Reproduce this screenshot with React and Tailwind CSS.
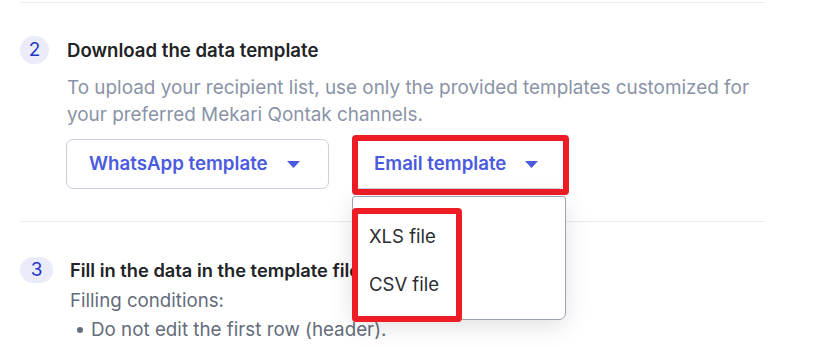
import React from "react";

const Caret = () => (
  <svg width="13" height="7" viewBox="0 0 13 7" className="shrink-0">
    <path d="M0 0 L13 0 L6.5 7 Z" fill="#4a5be0" />
  </svg>
);

const StepBadge = ({ n, className }) => (
  <div
    className={`flex items-center justify-center rounded-full bg-[#ebecfa] text-[#2438c4] text-[19px] ${className}`}
  >
    {n}
  </div>
);

export default function App() {
  return (
    <div
      className="relative w-[824px] h-[347px] overflow-hidden bg-white"
      style={{ fontFamily: "Inter, 'Noto Sans', sans-serif" }}
    >
      <div className="w-[745px] ml-[20px]">
        {/* === Top divider === */}
        <div className="mt-[2px] h-px bg-[#ececef]" />

        {/* === Step 2 === */}
        <div className="flex mt-[33px]">
          <StepBadge n="2" className="w-[29px] h-[28px] shrink-0" />
          <div className="ml-[18px] flex-1">
            <h3 className="text-[18.6px] leading-[28px] font-semibold text-[#222326]">
              Download the data template
            </h3>
            <p className="mt-[10px] text-[18.9px] leading-[27px] text-[#8a93a7] whitespace-nowrap">
              To upload your recipient list, use only the provided templates customized for
              <br />
              your preferred Mekari Qontak channels.
            </p>
            <div className="flex gap-[23px] mt-[11px] -ml-[1px]">
              <button className="flex items-center justify-between w-[263px] h-[50px] pl-[22px] pr-[28px] rounded-[7px] border border-[#c9cfdd] text-[18.7px] font-semibold text-[#4a5be0]">
                WhatsApp template
                <Caret />
              </button>
              <button className="flex items-center w-[213px] h-[50px] pl-[21px] rounded-[7px] border border-[#c9cfdd] text-[18.7px] font-semibold text-[#4a5be0]">
                Email template
                <span className="ml-[19px]">
                  <Caret />
                </span>
              </button>
            </div>
          </div>
        </div>

        {/* === Divider === */}
        <div className="mt-[32px] h-px bg-[#ececef]" />

        {/* === Step 3 === */}
        <div className="flex mt-[35px]">
          <StepBadge n="3" className="w-[33px] h-[26px] shrink-0" />
          <div className="ml-[17px] flex-1">
            <h3 className="text-[18.3px] leading-[26px] font-semibold text-[#222326] whitespace-nowrap">
              Fill in the data in the template file
            </h3>
            <p className="mt-[4px] text-[18.7px] leading-[28px] text-[#646c7b]">Filling conditions:</p>
            <ul className="text-[18.8px] leading-[30px] text-[#646c7b]">
              <li className="flex items-center">
                <span className="w-[6px] h-[6px] rounded-full bg-[#646c7b] ml-[7px] mr-[8px]" />
                Do not edit the first row (header).
              </li>
            </ul>
          </div>
        </div>
      </div>

      {/* === Highlight around Email template === */}
      <div className="absolute left-[352px] top-[135px] w-[217px] h-[60px] border-[6px] border-[#ee1c25] rounded-[4px]" />

      {/* === Dropdown menu === */}
      <div className="absolute left-[352px] top-[196px] w-[214px] h-[124px] bg-white border border-[#9aa2b3] rounded-b-[7px] rounded-t-[3px] shadow-[0_6px_24px_rgba(0,0,0,0.12)]">
        <div className="pt-[27px] pl-[16px] text-[18.5px] text-[#2a2c31]">
          <div className="leading-[24px]">XLS file</div>
          <div className="leading-[24px] mt-[24px]">CSV file</div>
        </div>
      </div>

      {/* === Highlight around menu items === */}
      <div className="absolute left-[352px] top-[208px] w-[110px] h-[114px] border-[6px] border-[#ee1c25] rounded-[4px]" />
    </div>
  );
}
